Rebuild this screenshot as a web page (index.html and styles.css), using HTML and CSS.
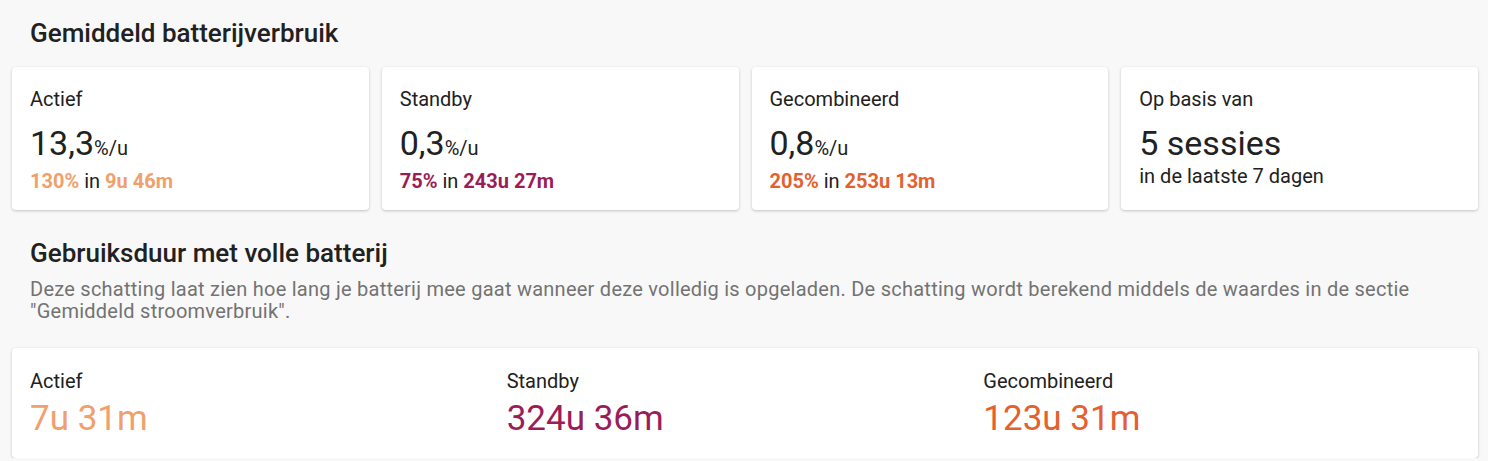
FILE: index.html
```html
<!DOCTYPE html>
<html lang="nl">
<head>
    <meta charset="UTF-8">
    <meta name="viewport" content="width=device-width, initial-scale=1.0">
    <title>Batterijverbruik</title>
    <link rel="stylesheet" href="styles.css">
</head>
<body>

<div class="page">
    <h2 class="section-title">Gemiddeld batterijverbruik</h2>

    <div class="stat-row">
        <div class="card stat">
            <div class="stat-label">Actief</div>
            <div class="stat-value">13,3<span class="unit">%/u</span></div>
            <div class="stat-sub"><b class="c-active">130%</b> in <b class="c-active">9u 46m</b></div>
        </div>
        <div class="card stat">
            <div class="stat-label">Standby</div>
            <div class="stat-value">0,3<span class="unit">%/u</span></div>
            <div class="stat-sub"><b class="c-standby">75%</b> in <b class="c-standby">243u 27m</b></div>
        </div>
        <div class="card stat">
            <div class="stat-label">Gecombineerd</div>
            <div class="stat-value">0,8<span class="unit">%/u</span></div>
            <div class="stat-sub"><b class="c-combined">205%</b> in <b class="c-combined">253u 13m</b></div>
        </div>
        <div class="card stat">
            <div class="stat-label">Op basis van</div>
            <div class="stat-value">5 sessies</div>
            <div class="stat-sub">in de laatste 7 dagen</div>
        </div>
    </div>

    <h2 class="section-title second">Gebruiksduur met volle batterij</h2>
    <p class="section-desc">Deze schatting laat zien hoe lang je batterij mee gaat wanneer deze volledig is opgeladen. De schatting wordt berekend middels de waardes in de sectie "Gemiddeld stroomverbruik".</p>

    <div class="card duration">
        <div class="duration-item">
            <div class="stat-label">Actief</div>
            <div class="duration-value c-active">7u 31m</div>
        </div>
        <div class="duration-item">
            <div class="stat-label">Standby</div>
            <div class="duration-value c-standby">324u 36m</div>
        </div>
        <div class="duration-item">
            <div class="stat-label">Gecombineerd</div>
            <div class="duration-value c-combined">123u 31m</div>
        </div>
    </div>
</div>

</body>
</html>
```

FILE: styles.css
```css
body {
    font-family: Roboto, "Noto Sans", sans-serif;
    margin: 0;
    padding: 0;
    background-color: #f8f8f8;
    color: #212121;
}

.page {
    padding: 17px 10px 0 12px;
}

.section-title {
    margin: 0 0 18px;
    padding-left: 18px;
    font-size: 26px;
    line-height: 32px;
    font-weight: 500;
}

.section-title.second {
    margin: 27px 0 9px;
}

.section-desc {
    margin: 0 0 26px;
    padding-left: 18px;
    font-size: 20px;
    line-height: 22px;
    letter-spacing: 0.25px;
    color: #737373;
}

.card {
    background-color: #fff;
    border-radius: 4px;
    box-shadow: 0 1px 3px rgba(0, 0, 0, 0.22);
}

.stat-row {
    display: grid;
    grid-template-columns: repeat(4, 1fr);
    gap: 13px;
}

.stat {
    padding: 20px 18px 17px;
}

.stat-label {
    font-size: 20px;
    line-height: 24px;
}

.stat .stat-label {
    margin-bottom: 12px;
}

.stat-value {
    font-size: 34px;
    line-height: 40px;
    margin-bottom: 1px;
}

.unit {
    font-size: 20px;
}

.stat-sub {
    font-size: 20px;
    line-height: 24px;
}

.stat-sub b {
    font-weight: 700;
}

.duration {
    display: grid;
    grid-template-columns: repeat(3, 1fr);
    padding: 21px 18px 19px;
}

.duration-value {
    font-size: 35px;
    line-height: 40px;
    margin-top: 6px;
}

.c-active {
    color: #f0a06c;
}

.c-standby {
    color: #9b1d58;
}

.c-combined {
    color: #e4612f;
}
```
